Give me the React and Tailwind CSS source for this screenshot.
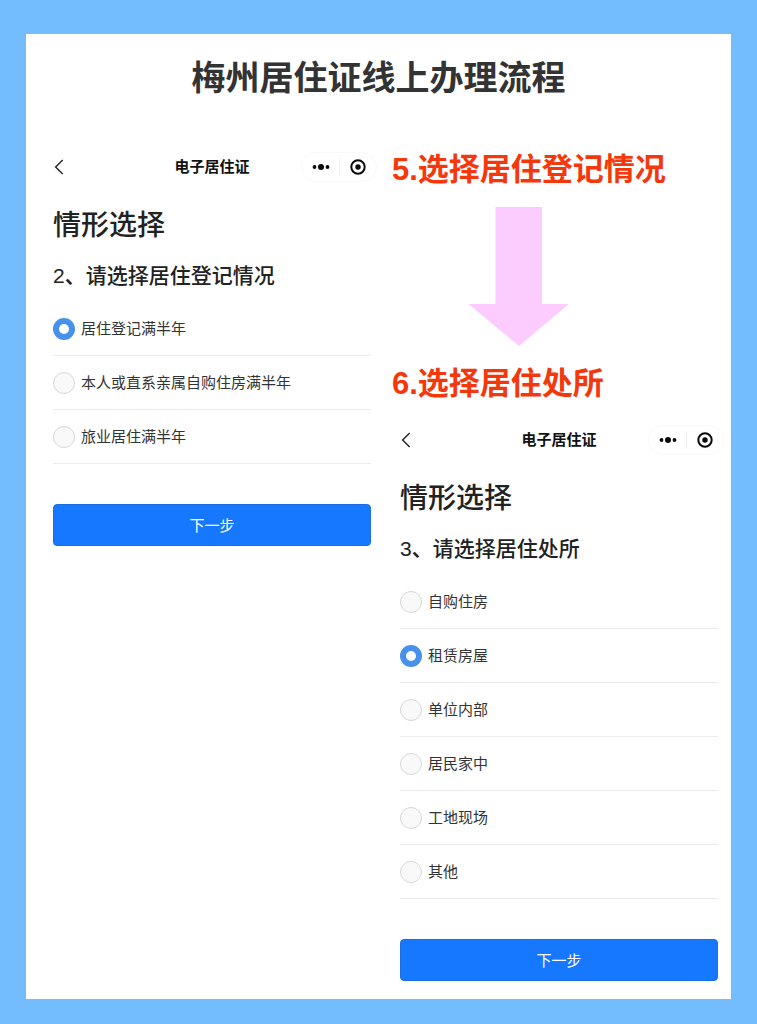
import { useState } from 'react';

const registrationOptions = [
  { id: 'half-year', label: '居住登记满半年' },
  { id: 'own-house', label: '本人或直系亲属自购住房满半年' },
  { id: 'hotel', label: '旅业居住满半年' },
];

const placeOptions = [
  { id: 'purchased', label: '自购住房' },
  { id: 'rental', label: '租赁房屋' },
  { id: 'workplace', label: '单位内部' },
  { id: 'resident-home', label: '居民家中' },
  { id: 'site', label: '工地现场' },
  { id: 'other', label: '其他' },
];

// Mini program navigation bar: back, title, capsule menu
const NavBar = ({ title }) => {
  return (
    <header className="grid h-[30px] grid-cols-[1fr_auto_1fr] items-center">
      <button type="button" aria-label="返回" className="flex w-5 items-center">
        <svg width="12" height="16" viewBox="0 0 12 16" fill="none" stroke="#222" strokeWidth="1.4">
          <path d="M9.7 1 2.6 8l7.1 7" />
        </svg>
      </button>
      <h2 className="text-[15px] font-bold leading-5 text-[#111]">{title}</h2>
      <div className="-mr-[6px] flex h-[30px] w-[76px] items-center justify-self-end rounded-full border border-[#f8f8f8]">
        <button type="button" aria-label="更多" className="flex h-4 flex-1 items-center justify-center border-r border-[#eee]">
          <svg width="20" height="8" viewBox="0 0 20 8" fill="#0a0a0a">
            <circle cx="4.5" cy="4" r="1.9" />
            <circle cx="11" cy="4" r="3" />
            <circle cx="17.5" cy="4" r="1.9" />
          </svg>
        </button>
        <button type="button" aria-label="关闭" className="flex h-4 flex-1 items-center justify-center">
          <svg width="17" height="16" viewBox="0 0 17 16">
            <circle cx="9" cy="8" r="6.7" fill="none" stroke="#0a0a0a" strokeWidth="2" />
            <circle cx="9" cy="8" r="2.7" fill="#0a0a0a" />
          </svg>
        </button>
      </div>
    </header>
  );
};

const Screen = ({ name, question, options, defaultOption }) => {
  const [selected, setSelected] = useState(defaultOption);

  return (
    <section className="pl-2">
      <NavBar title="电子居住证" />
      <h3 className="mt-6 text-[28px] font-medium leading-10 text-[#222]">情形选择</h3>
      <fieldset className="mt-4">
        <legend className="text-[21px] font-medium leading-7 text-[#222]">{question}</legend>
        <div className="mt-3">
          {options.map((option) => (
            <label
              key={option.id}
              className="flex h-[54px] items-center gap-[6px] border-b border-[#ececec] text-[15px] text-[#333]"
            >
              <input
                type="radio"
                name={name}
                value={option.id}
                checked={selected === option.id}
                onChange={() => setSelected(option.id)}
                className="size-[22px] shrink-0 appearance-none rounded-full border border-[#d8d8d8] bg-[#f9f9f9] checked:border-[6px] checked:border-[#4691eb] checked:bg-white"
              />
              <span className="pt-0.5">{option.label}</span>
            </label>
          ))}
        </div>
      </fieldset>
      <button
        type="button"
        className="mt-10 h-[42px] w-full rounded border border-[#1a6fe0] bg-[#1677ff] pt-0.5 text-[15px] text-white"
      >
        下一步
      </button>
    </section>
  );
};

const StepTitle = ({ children }) => (
  <h2 className="text-[31px] font-bold leading-9 text-[#f5380c]">{children}</h2>
);

const App = () => {
  return (
    <div className="min-h-screen bg-[#73bdff] px-[26px] pb-[25px] pt-[34px] font-['Liberation_Sans','Noto_Sans_CJK_SC',sans-serif]">
      <main className="bg-white pb-[18px] pl-[19px] pr-[13px] pt-5">
        <h1 className="pr-[6px] text-center text-[34px] font-bold leading-[48px] text-[#333]">
          梅州居住证线上办理流程
        </h1>
        <div className="mt-[50px] grid grid-cols-2 items-start gap-[21px]">
          <Screen
            name="registration"
            question="2、请选择居住登记情况"
            options={registrationOptions}
            defaultOption="half-year"
          />
          <div>
            <StepTitle>5.选择居住登记情况</StepTitle>
            <svg className="mb-5 ml-[76px] mt-[19px] block" width="102" height="139" viewBox="0 0 102 139" fill="#fccbff">
              <path d="M27.5 0h46.5v97h27L51 139 .5 97h27z" />
            </svg>
            <StepTitle>6.选择居住处所</StepTitle>
            <div className="mt-[23px]">
              <Screen
                name="place"
                question="3、请选择居住处所"
                options={placeOptions}
                defaultOption="rental"
              />
            </div>
          </div>
        </div>
      </main>
    </div>
  );
};

export default App;
